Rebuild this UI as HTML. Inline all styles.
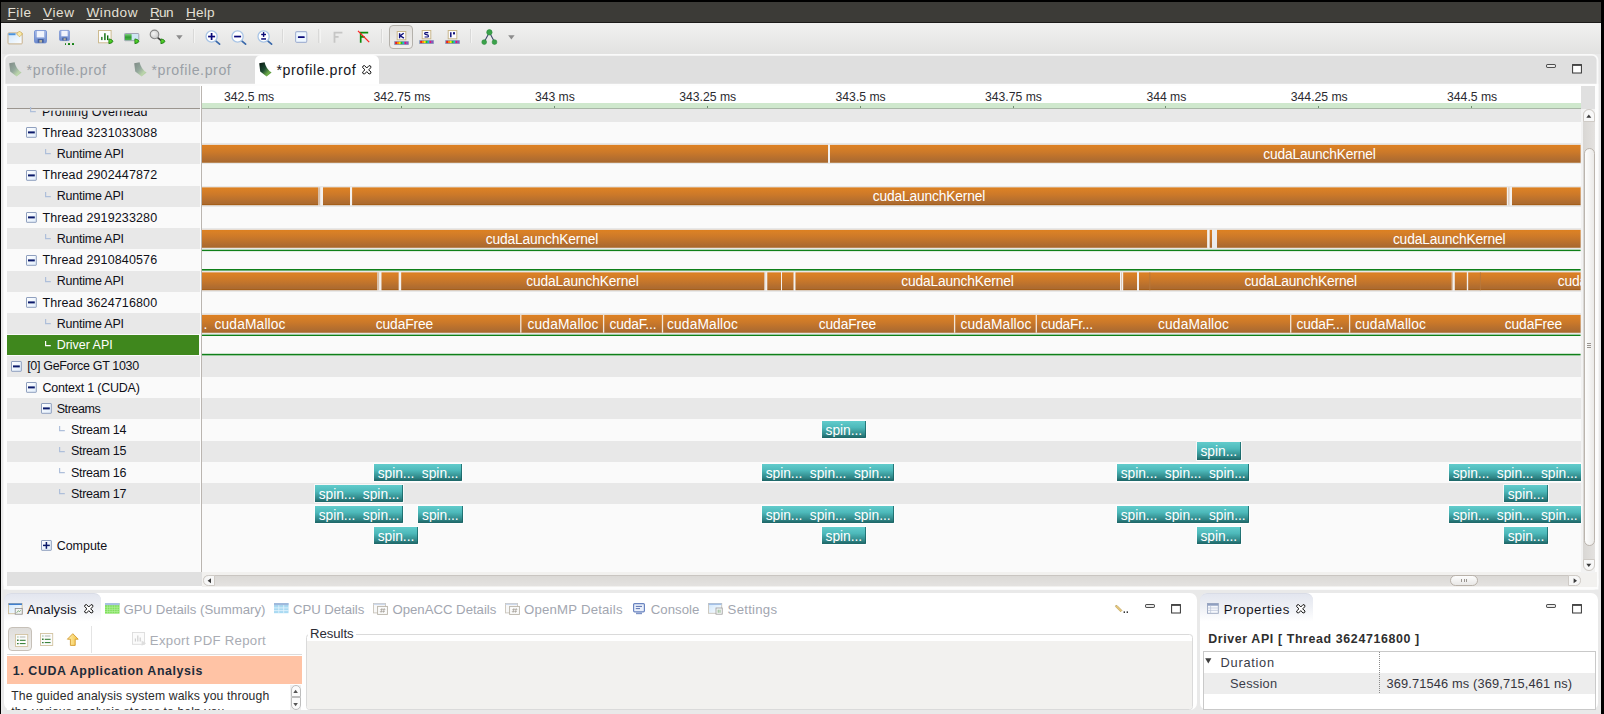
<!DOCTYPE html>
<html><head><meta charset="utf-8"><title>NVIDIA Visual Profiler</title>
<style>
html,body{margin:0;padding:0;}
body{width:1604px;height:714px;overflow:hidden;background:#000;position:relative;font-family:"Liberation Sans", sans-serif;}
#root{position:absolute;left:0;top:0;width:1604px;height:714px;overflow:hidden;}
#root div{position:absolute;box-sizing:border-box;}
#root svg{position:absolute;overflow:visible;}
.t{position:absolute;white-space:pre;}
u{text-decoration-thickness:1px;text-underline-offset:2px;}
</style></head><body><div id="root">
<div style="left:1px;top:2px;width:1600px;height:712px;background:#e9e9e9;"></div>
<div style="left:1px;top:2px;width:1600px;height:20.5px;background:#3c3b37;"></div>
<div style="left:1px;top:22px;width:1600px;height:1px;background:#1c1b19;"></div>
<span class="t" style="left:7.50px;top:5px;font-size:13.6px;line-height:15px;color:#e4e0d6;letter-spacing:0.531px;"><u>F</u>ile</span>
<span class="t" style="left:43.00px;top:5px;font-size:13.6px;line-height:15px;color:#e4e0d6;letter-spacing:0.594px;"><u>V</u>iew</span>
<span class="t" style="left:86.50px;top:5px;font-size:13.6px;line-height:15px;color:#e4e0d6;letter-spacing:0.528px;"><u>W</u>indow</span>
<span class="t" style="left:150.00px;top:5px;font-size:13.6px;line-height:15px;color:#e4e0d6;letter-spacing:-0.719px;"><u>R</u>un</span>
<span class="t" style="left:186.00px;top:5px;font-size:13.6px;line-height:15px;color:#e4e0d6;letter-spacing:0.177px;"><u>H</u>elp</span>
<div style="left:1px;top:23px;width:1600px;height:31px;background:linear-gradient(#f1f1f0,#e2e2e1);"></div>
<div style="left:1px;top:23px;width:1.2px;height:691px;background:#ececec;"></div>
<svg style="left:0;top:0" width="1604" height="714"><rect x="4.5" y="54.8" width="1593" height="533.8" rx="5.5" fill="#dfdfdf" stroke="#fafafa" stroke-width="1.8"/></svg>
<div style="left:254.8px;top:55px;width:124.4px;height:29px;background:#fff;border-radius:6px 6px 0 0;"></div>
<span class="t" style="left:26.60px;top:62px;font-size:14.2px;line-height:16px;color:#9a9fa6;letter-spacing:0.570px;">*profile.prof</span>
<span class="t" style="left:151.40px;top:62px;font-size:14.2px;line-height:16px;color:#9a9fa6;letter-spacing:0.570px;">*profile.prof</span>
<span class="t" style="left:276.50px;top:62px;font-size:14.2px;line-height:16px;color:#16161c;letter-spacing:0.553px;">*profile.prof</span>
<svg style="left:0;top:0" width="1604" height="714"><rect x="3.6" y="83.8" width="1594.8" height="505.7" rx="0" fill="#fdfdfd"/></svg>
<svg style="left:0;top:0" width="1604" height="714"><rect x="3.6" y="575" width="1594.8" height="14.5" rx="5" fill="#fdfdfd"/></svg>
<div style="left:7px;top:86px;width:193px;height:22.4px;background:#e1e1e1;"></div>
<div style="left:7px;top:108px;width:193px;height:1px;background:#9b958f;"></div>
<div style="left:202px;top:86px;width:1378.6px;height:17px;background:#fff;"></div>
<div style="left:202px;top:103px;width:1378.6px;height:5.4px;background:#cfe8cd;"></div>
<div style="left:202px;top:108px;width:1378.6px;height:1px;background:#a9b7a7;"></div>
<div style="left:248.1px;top:105.5px;width:1px;height:2.5px;background:#6f8f6f;"></div>
<span class="t" style="left:224.03px;top:90px;font-size:12.2px;line-height:14px;color:#2a2a30;">342.5 ms</span>
<div style="left:400.98px;top:105.5px;width:1px;height:2.5px;background:#6f8f6f;"></div>
<span class="t" style="left:373.52px;top:90px;font-size:12.2px;line-height:14px;color:#2a2a30;">342.75 ms</span>
<div style="left:553.86px;top:105.5px;width:1px;height:2.5px;background:#6f8f6f;"></div>
<span class="t" style="left:534.88px;top:90px;font-size:12.2px;line-height:14px;color:#2a2a30;">343 ms</span>
<div style="left:706.74px;top:105.5px;width:1px;height:2.5px;background:#6f8f6f;"></div>
<span class="t" style="left:679.28px;top:90px;font-size:12.2px;line-height:14px;color:#2a2a30;">343.25 ms</span>
<div style="left:859.62px;top:105.5px;width:1px;height:2.5px;background:#6f8f6f;"></div>
<span class="t" style="left:835.55px;top:90px;font-size:12.2px;line-height:14px;color:#2a2a30;">343.5 ms</span>
<div style="left:1012.5px;top:105.5px;width:1px;height:2.5px;background:#6f8f6f;"></div>
<span class="t" style="left:985.04px;top:90px;font-size:12.2px;line-height:14px;color:#2a2a30;">343.75 ms</span>
<div style="left:1165.38px;top:105.5px;width:1px;height:2.5px;background:#6f8f6f;"></div>
<span class="t" style="left:1146.40px;top:90px;font-size:12.2px;line-height:14px;color:#2a2a30;">344 ms</span>
<div style="left:1318.26px;top:105.5px;width:1px;height:2.5px;background:#6f8f6f;"></div>
<span class="t" style="left:1290.80px;top:90px;font-size:12.2px;line-height:14px;color:#2a2a30;">344.25 ms</span>
<div style="left:1471.14px;top:105.5px;width:1px;height:2.5px;background:#6f8f6f;"></div>
<span class="t" style="left:1447.07px;top:90px;font-size:12.2px;line-height:14px;color:#2a2a30;">344.5 ms</span>
<div style="left:7px;top:109px;width:193px;height:12.8px;background:#e8e8e8;"></div>
<div style="left:202px;top:109px;width:1378.6px;height:12.8px;background:#e8e8e8;"></div>
<svg style="left:30px;top:106.5px" width="7" height="6" viewBox="0 0 7 6"><path d="M0.6 0 V4.6 H5.8" fill="none" stroke="#aebfda" stroke-width="1.2"/></svg>
<span class="t" style="left:42.00px;top:105px;font-size:12.5px;line-height:14px;color:#101018;letter-spacing:0.116px;clip-path:inset(5.7px 0 0 0);">Profiling Overhead</span>
<div style="left:7px;top:121.8px;width:193px;height:21.35px;background:#fafafa;"></div>
<div style="left:202px;top:121.8px;width:1378.6px;height:21.35px;background:#fafafa;"></div>
<svg style="left:26.4px;top:127.1px" width="11" height="11" viewBox="0 0 11 11"><defs><linearGradient id="eg" x1="0" y1="0" x2="1" y2="1"><stop offset="0" stop-color="#fff"/><stop offset="1" stop-color="#e1eefc"/></linearGradient></defs><rect x="0.5" y="0.5" width="9.8" height="9.8" rx="0.4" fill="url(#eg)" stroke="#8f9fbe" stroke-width="1"/><rect x="2" y="4.4" width="6.8" height="2" fill="#0b1a6a"/></svg>
<span class="t" style="left:42.40px;top:126px;font-size:12.5px;line-height:14px;color:#101018;letter-spacing:0.131px;">Thread 3231033088</span>
<div style="left:7px;top:143.05px;width:193px;height:21.35px;background:#e8e8e8;"></div>
<div style="left:202px;top:143.05px;width:1378.6px;height:21.35px;background:#e8e8e8;"></div>
<svg style="left:45px;top:149.35px" width="7" height="6" viewBox="0 0 7 6"><path d="M0.6 0 V4.6 H5.8" fill="none" stroke="#aebfda" stroke-width="1.2"/></svg>
<span class="t" style="left:56.70px;top:147px;font-size:12.5px;line-height:14px;color:#101018;letter-spacing:-0.218px;">Runtime API</span>
<div style="left:7px;top:164.3px;width:193px;height:21.35px;background:#fafafa;"></div>
<div style="left:202px;top:164.3px;width:1378.6px;height:21.35px;background:#fafafa;"></div>
<svg style="left:26.4px;top:169.6px" width="11" height="11" viewBox="0 0 11 11"><defs><linearGradient id="eg" x1="0" y1="0" x2="1" y2="1"><stop offset="0" stop-color="#fff"/><stop offset="1" stop-color="#e1eefc"/></linearGradient></defs><rect x="0.5" y="0.5" width="9.8" height="9.8" rx="0.4" fill="url(#eg)" stroke="#8f9fbe" stroke-width="1"/><rect x="2" y="4.4" width="6.8" height="2" fill="#0b1a6a"/></svg>
<span class="t" style="left:42.40px;top:168px;font-size:12.5px;line-height:14px;color:#101018;letter-spacing:0.131px;">Thread 2902447872</span>
<div style="left:7px;top:185.55px;width:193px;height:21.35px;background:#e8e8e8;"></div>
<div style="left:202px;top:185.55px;width:1378.6px;height:21.35px;background:#e8e8e8;"></div>
<svg style="left:45px;top:191.85px" width="7" height="6" viewBox="0 0 7 6"><path d="M0.6 0 V4.6 H5.8" fill="none" stroke="#aebfda" stroke-width="1.2"/></svg>
<span class="t" style="left:56.70px;top:189px;font-size:12.5px;line-height:14px;color:#101018;letter-spacing:-0.218px;">Runtime API</span>
<div style="left:7px;top:206.8px;width:193px;height:21.35px;background:#fafafa;"></div>
<div style="left:202px;top:206.8px;width:1378.6px;height:21.35px;background:#fafafa;"></div>
<svg style="left:26.4px;top:212.1px" width="11" height="11" viewBox="0 0 11 11"><defs><linearGradient id="eg" x1="0" y1="0" x2="1" y2="1"><stop offset="0" stop-color="#fff"/><stop offset="1" stop-color="#e1eefc"/></linearGradient></defs><rect x="0.5" y="0.5" width="9.8" height="9.8" rx="0.4" fill="url(#eg)" stroke="#8f9fbe" stroke-width="1"/><rect x="2" y="4.4" width="6.8" height="2" fill="#0b1a6a"/></svg>
<span class="t" style="left:42.40px;top:211px;font-size:12.5px;line-height:14px;color:#101018;letter-spacing:0.131px;">Thread 2919233280</span>
<div style="left:7px;top:228.05px;width:193px;height:21.35px;background:#e8e8e8;"></div>
<div style="left:202px;top:228.05px;width:1378.6px;height:21.35px;background:#e8e8e8;"></div>
<svg style="left:45px;top:234.35px" width="7" height="6" viewBox="0 0 7 6"><path d="M0.6 0 V4.6 H5.8" fill="none" stroke="#aebfda" stroke-width="1.2"/></svg>
<span class="t" style="left:56.70px;top:232px;font-size:12.5px;line-height:14px;color:#101018;letter-spacing:-0.218px;">Runtime API</span>
<div style="left:7px;top:249.3px;width:193px;height:21.35px;background:#fafafa;"></div>
<div style="left:202px;top:249.3px;width:1378.6px;height:21.35px;background:#fafafa;"></div>
<svg style="left:26.4px;top:254.6px" width="11" height="11" viewBox="0 0 11 11"><defs><linearGradient id="eg" x1="0" y1="0" x2="1" y2="1"><stop offset="0" stop-color="#fff"/><stop offset="1" stop-color="#e1eefc"/></linearGradient></defs><rect x="0.5" y="0.5" width="9.8" height="9.8" rx="0.4" fill="url(#eg)" stroke="#8f9fbe" stroke-width="1"/><rect x="2" y="4.4" width="6.8" height="2" fill="#0b1a6a"/></svg>
<span class="t" style="left:42.40px;top:253px;font-size:12.5px;line-height:14px;color:#101018;letter-spacing:0.131px;">Thread 2910840576</span>
<div style="left:7px;top:270.55px;width:193px;height:21.35px;background:#e8e8e8;"></div>
<div style="left:202px;top:270.55px;width:1378.6px;height:21.35px;background:#e8e8e8;"></div>
<svg style="left:45px;top:276.85px" width="7" height="6" viewBox="0 0 7 6"><path d="M0.6 0 V4.6 H5.8" fill="none" stroke="#aebfda" stroke-width="1.2"/></svg>
<span class="t" style="left:56.70px;top:274px;font-size:12.5px;line-height:14px;color:#101018;letter-spacing:-0.218px;">Runtime API</span>
<div style="left:7px;top:291.8px;width:193px;height:21.35px;background:#fafafa;"></div>
<div style="left:202px;top:291.8px;width:1378.6px;height:21.35px;background:#fafafa;"></div>
<svg style="left:26.4px;top:297.1px" width="11" height="11" viewBox="0 0 11 11"><defs><linearGradient id="eg" x1="0" y1="0" x2="1" y2="1"><stop offset="0" stop-color="#fff"/><stop offset="1" stop-color="#e1eefc"/></linearGradient></defs><rect x="0.5" y="0.5" width="9.8" height="9.8" rx="0.4" fill="url(#eg)" stroke="#8f9fbe" stroke-width="1"/><rect x="2" y="4.4" width="6.8" height="2" fill="#0b1a6a"/></svg>
<span class="t" style="left:42.40px;top:296px;font-size:12.5px;line-height:14px;color:#101018;letter-spacing:0.131px;">Thread 3624716800</span>
<div style="left:7px;top:313.05px;width:193px;height:21.35px;background:#e8e8e8;"></div>
<div style="left:202px;top:313.05px;width:1378.6px;height:21.35px;background:#e8e8e8;"></div>
<svg style="left:45px;top:319.35px" width="7" height="6" viewBox="0 0 7 6"><path d="M0.6 0 V4.6 H5.8" fill="none" stroke="#aebfda" stroke-width="1.2"/></svg>
<span class="t" style="left:56.70px;top:317px;font-size:12.5px;line-height:14px;color:#101018;letter-spacing:-0.218px;">Runtime API</span>
<div style="left:7px;top:334.3px;width:193px;height:21.35px;background:#fafafa;"></div>
<div style="left:202px;top:334.3px;width:1378.6px;height:21.35px;background:#fafafa;"></div>
<div style="left:7px;top:335px;width:192.2px;height:19.9px;background:#3f871d;"></div>
<svg style="left:45px;top:340.6px" width="7" height="6" viewBox="0 0 7 6"><path d="M0.6 0 V4.6 H5.8" fill="none" stroke="#fff" stroke-width="1.2"/></svg>
<span class="t" style="left:56.70px;top:338px;font-size:12.5px;line-height:14px;color:#fff;letter-spacing:-0.030px;">Driver API</span>
<div style="left:7px;top:355.55px;width:193px;height:21.35px;background:#e8e8e8;"></div>
<div style="left:202px;top:355.55px;width:1378.6px;height:21.35px;background:#e8e8e8;"></div>
<svg style="left:11.2px;top:360.85px" width="11" height="11" viewBox="0 0 11 11"><defs><linearGradient id="eg" x1="0" y1="0" x2="1" y2="1"><stop offset="0" stop-color="#fff"/><stop offset="1" stop-color="#e1eefc"/></linearGradient></defs><rect x="0.5" y="0.5" width="9.8" height="9.8" rx="0.4" fill="url(#eg)" stroke="#8f9fbe" stroke-width="1"/><rect x="2" y="4.4" width="6.8" height="2" fill="#0b1a6a"/></svg>
<span class="t" style="left:27.20px;top:359px;font-size:12.5px;line-height:14px;color:#101018;letter-spacing:-0.327px;">[0] GeForce GT 1030</span>
<div style="left:7px;top:376.8px;width:193px;height:21.35px;background:#fafafa;"></div>
<div style="left:202px;top:376.8px;width:1378.6px;height:21.35px;background:#fafafa;"></div>
<svg style="left:26.4px;top:382.1px" width="11" height="11" viewBox="0 0 11 11"><defs><linearGradient id="eg" x1="0" y1="0" x2="1" y2="1"><stop offset="0" stop-color="#fff"/><stop offset="1" stop-color="#e1eefc"/></linearGradient></defs><rect x="0.5" y="0.5" width="9.8" height="9.8" rx="0.4" fill="url(#eg)" stroke="#8f9fbe" stroke-width="1"/><rect x="2" y="4.4" width="6.8" height="2" fill="#0b1a6a"/></svg>
<span class="t" style="left:42.40px;top:381px;font-size:12.5px;line-height:14px;color:#101018;letter-spacing:-0.216px;">Context 1 (CUDA)</span>
<div style="left:7px;top:398.05px;width:193px;height:21.35px;background:#e8e8e8;"></div>
<div style="left:202px;top:398.05px;width:1378.6px;height:21.35px;background:#e8e8e8;"></div>
<svg style="left:40.7px;top:403.35px" width="11" height="11" viewBox="0 0 11 11"><defs><linearGradient id="eg" x1="0" y1="0" x2="1" y2="1"><stop offset="0" stop-color="#fff"/><stop offset="1" stop-color="#e1eefc"/></linearGradient></defs><rect x="0.5" y="0.5" width="9.8" height="9.8" rx="0.4" fill="url(#eg)" stroke="#8f9fbe" stroke-width="1"/><rect x="2" y="4.4" width="6.8" height="2" fill="#0b1a6a"/></svg>
<span class="t" style="left:56.70px;top:402px;font-size:12.5px;line-height:14px;color:#101018;letter-spacing:-0.424px;">Streams</span>
<div style="left:7px;top:419.3px;width:193px;height:21.35px;background:#fafafa;"></div>
<div style="left:202px;top:419.3px;width:1378.6px;height:21.35px;background:#fafafa;"></div>
<svg style="left:59.2px;top:425.6px" width="7" height="6" viewBox="0 0 7 6"><path d="M0.6 0 V4.6 H5.8" fill="none" stroke="#aebfda" stroke-width="1.2"/></svg>
<span class="t" style="left:70.90px;top:423px;font-size:12.5px;line-height:14px;color:#101018;letter-spacing:-0.271px;">Stream 14</span>
<div style="left:7px;top:440.55px;width:193px;height:21.35px;background:#e8e8e8;"></div>
<div style="left:202px;top:440.55px;width:1378.6px;height:21.35px;background:#e8e8e8;"></div>
<svg style="left:59.2px;top:446.85px" width="7" height="6" viewBox="0 0 7 6"><path d="M0.6 0 V4.6 H5.8" fill="none" stroke="#aebfda" stroke-width="1.2"/></svg>
<span class="t" style="left:70.90px;top:444px;font-size:12.5px;line-height:14px;color:#101018;letter-spacing:-0.271px;">Stream 15</span>
<div style="left:7px;top:461.8px;width:193px;height:21.35px;background:#fafafa;"></div>
<div style="left:202px;top:461.8px;width:1378.6px;height:21.35px;background:#fafafa;"></div>
<svg style="left:59.2px;top:468.1px" width="7" height="6" viewBox="0 0 7 6"><path d="M0.6 0 V4.6 H5.8" fill="none" stroke="#aebfda" stroke-width="1.2"/></svg>
<span class="t" style="left:70.90px;top:466px;font-size:12.5px;line-height:14px;color:#101018;letter-spacing:-0.271px;">Stream 16</span>
<div style="left:7px;top:483.05px;width:193px;height:21.35px;background:#e8e8e8;"></div>
<div style="left:202px;top:483.05px;width:1378.6px;height:21.35px;background:#e8e8e8;"></div>
<svg style="left:59.2px;top:489.35px" width="7" height="6" viewBox="0 0 7 6"><path d="M0.6 0 V4.6 H5.8" fill="none" stroke="#aebfda" stroke-width="1.2"/></svg>
<span class="t" style="left:70.90px;top:487px;font-size:12.5px;line-height:14px;color:#101018;letter-spacing:-0.271px;">Stream 17</span>
<div style="left:7px;top:504.3px;width:193px;height:68.2px;background:#fafafa;"></div>
<div style="left:202px;top:504.3px;width:1378.6px;height:68.2px;background:#fafafa;"></div>
<svg style="left:40.7px;top:539.5px" width="11" height="11" viewBox="0 0 11 11"><defs><linearGradient id="eg" x1="0" y1="0" x2="1" y2="1"><stop offset="0" stop-color="#fff"/><stop offset="1" stop-color="#e1eefc"/></linearGradient></defs><rect x="0.5" y="0.5" width="9.8" height="9.8" rx="0.4" fill="url(#eg)" stroke="#8f9fbe" stroke-width="1"/><rect x="2" y="4.65" width="6.8" height="1.5" fill="#0b1a6a"/><rect x="4.65" y="2" width="1.5" height="6.8" fill="#0b1a6a"/></svg>
<span class="t" style="left:56.70px;top:539px;font-size:12.5px;line-height:14px;color:#101018;letter-spacing:-0.039px;">Compute</span>
<div style="left:6.6px;top:572.2px;width:195px;height:14.2px;background:#e0e0e0;"></div>
<div style="left:202px;top:572px;width:1394.6px;height:14.5px;background:#f2f1ef;"></div>
<div style="left:203px;top:574.7px;width:1377.6px;height:11.8px;background:linear-gradient(#dbd9d6,#e4e2e0);border-top:1px solid #c9c5c1;border-radius:6px;"></div>
<div style="left:203px;top:574.8px;width:12.3px;height:11.4px;background:#f7f7f7;border:1px solid #cfcbc6;border-radius:6px 0 0 6px;"></div>
<div style="left:1568.4px;top:574.8px;width:12.2px;height:11.4px;background:#f7f7f7;border:1px solid #cfcbc6;border-radius:0 6px 6px 0;"></div>
<svg style="left:207px;top:577.7px" width="5" height="6"><path d="M4 0.3 L0.6 2.8 L4 5.3Z" fill="#3a3a3a"/></svg>
<svg style="left:1572.6px;top:577.7px" width="5" height="6"><path d="M0.6 0.3 L4 2.8 L0.6 5.3Z" fill="#3a3a3a"/></svg>
<div style="left:1449.5px;top:574.6px;width:28.1px;height:11.7px;background:linear-gradient(#fdfdfd,#e9e8e6);border:1px solid #b9b2aa;border-radius:6px;"></div>
<div style="left:1461.3px;top:578.6px;width:1px;height:3.6px;background:#9a9590;"></div>
<div style="left:1463.5px;top:578.6px;width:1px;height:3.6px;background:#9a9590;"></div>
<div style="left:1465.7px;top:578.6px;width:1px;height:3.6px;background:#9a9590;"></div>
<div style="left:200.7px;top:86px;width:1.5px;height:486px;background:#bab5b0;"></div>
<div style="left:1580.6px;top:86px;width:14.7px;height:486.5px;background:#f2f2f2;"></div>
<div style="left:1581px;top:86.2px;width:14px;height:22.4px;background:#e0e0e0;"></div>
<div style="left:1583.3px;top:109.2px;width:11.5px;height:462px;background:linear-gradient(90deg,#d9d7d4,#e3e1df);border-radius:6px;"></div>
<div style="left:1583.3px;top:109.2px;width:11.5px;height:12.4px;background:#f8f8f8;border:1px solid #cfcbc6;border-radius:6px 6px 0 0;"></div>
<div style="left:1583.3px;top:558.7px;width:11.5px;height:12.5px;background:#f8f8f8;border:1px solid #cfcbc6;border-radius:0 0 6px 6px;"></div>
<svg style="left:1586.3px;top:113.8px" width="6" height="5"><path d="M0.3 3.8 L2.8 0.6 L5.3 3.8Z" fill="#3a3a3a"/></svg>
<svg style="left:1586.3px;top:563.2px" width="6" height="5"><path d="M0.3 0.8 L2.8 4 L5.3 0.8Z" fill="#3a3a3a"/></svg>
<div style="left:1583.6px;top:147.5px;width:11px;height:398.2px;background:linear-gradient(90deg,#fdfdfd,#ebeae8);border:1px solid #bbb5ae;border-radius:6px;"></div>
<div style="left:1587.3px;top:342.6px;width:3.6px;height:1px;background:#9a9590;"></div>
<div style="left:1587.3px;top:344.8px;width:3.6px;height:1px;background:#9a9590;"></div>
<div style="left:1587.3px;top:347px;width:3.6px;height:1px;background:#9a9590;"></div>
<svg style="left:0;top:0" width="1604" height="714"><defs><linearGradient id="gor" x1="0" y1="0" x2="0" y2="1"><stop offset="0" stop-color="#dd7f1f"/><stop offset="0.12" stop-color="#d98026"/><stop offset="0.4" stop-color="#cc7929"/><stop offset="0.85" stop-color="#af6c30"/><stop offset="0.93" stop-color="#ac6a2f"/><stop offset="0.96" stop-color="#a55f1a"/><stop offset="1" stop-color="#a55f1a"/></linearGradient></defs><rect x="202" y="144.9" width="626" height="17.8" fill="url(#gor)"/><rect x="828" y="144.9" width="2" height="17.8" fill="#f3f1ef"/><rect x="830" y="144.9" width="750.6" height="17.8" fill="url(#gor)"/><rect x="202" y="187.4" width="116" height="17.8" fill="url(#gor)"/><rect x="318" y="187.4" width="2.4" height="17.8" fill="#d9bfa8"/><rect x="320.4" y="187.4" width="2.6" height="17.8" fill="#f3f1ef"/><rect x="323" y="187.4" width="27" height="17.8" fill="url(#gor)"/><rect x="350" y="187.4" width="2.1" height="17.8" fill="#f3f1ef"/><rect x="352.1" y="187.4" width="1154.8" height="17.8" fill="url(#gor)"/><rect x="1506.9" y="187.4" width="1.5" height="17.8" fill="#f3f1ef"/><rect x="1508.4" y="187.4" width="1.2" height="17.8" fill="#d9bfa8"/><rect x="1509.6" y="187.4" width="2.4" height="17.8" fill="#f3f1ef"/><rect x="1512" y="187.4" width="68.6" height="17.8" fill="url(#gor)"/><rect x="202" y="229.9" width="1005.3" height="17.8" fill="url(#gor)"/><rect x="1207.3" y="229.9" width="2.4" height="17.8" fill="#f3f1ef"/><rect x="1209.7" y="229.9" width="2.3" height="17.8" fill="url(#gor)"/><rect x="1212" y="229.9" width="5" height="17.8" fill="#ececec"/><rect x="1217" y="229.9" width="363.6" height="17.8" fill="url(#gor)"/><rect x="202" y="272.4" width="175.3" height="17.8" fill="url(#gor)"/><rect x="377.3" y="272.4" width="2" height="17.8" fill="#d9bfa8"/><rect x="379.3" y="272.4" width="2.2" height="17.8" fill="#f3f1ef"/><rect x="381.5" y="272.4" width="17.3" height="17.8" fill="url(#gor)"/><rect x="398.8" y="272.4" width="2.4" height="17.8" fill="#f3f1ef"/><rect x="401.2" y="272.4" width="362.8" height="17.8" fill="url(#gor)"/><rect x="764" y="272.4" width="1.4" height="17.8" fill="#d9bfa8"/><rect x="765.4" y="272.4" width="1.9" height="17.8" fill="#f3f1ef"/><rect x="767.3" y="272.4" width="13.7" height="17.8" fill="url(#gor)"/><rect x="781" y="272.4" width="1" height="17.8" fill="#f3f1ef"/><rect x="782" y="272.4" width="11.7" height="17.8" fill="url(#gor)"/><rect x="793.7" y="272.4" width="1.8" height="17.8" fill="#f3f1ef"/><rect x="795.5" y="272.4" width="324.5" height="17.8" fill="url(#gor)"/><rect x="1120" y="272.4" width="1.2" height="17.8" fill="#f3f1ef"/><rect x="1121.2" y="272.4" width="0.8" height="17.8" fill="#d9bfa8"/><rect x="1122" y="272.4" width="1.2" height="17.8" fill="#f3f1ef"/><rect x="1123.2" y="272.4" width="13.8" height="17.8" fill="url(#gor)"/><rect x="1137" y="272.4" width="2" height="17.8" fill="#f3f1ef"/><rect x="1139" y="272.4" width="312.8" height="17.8" fill="url(#gor)"/><rect x="1451.8" y="272.4" width="1.2" height="17.8" fill="#d9bfa8"/><rect x="1453" y="272.4" width="1.8" height="17.8" fill="#f3f1ef"/><rect x="1454.8" y="272.4" width="12.1" height="17.8" fill="url(#gor)"/><rect x="1466.9" y="272.4" width="1.3" height="17.8" fill="#f3f1ef"/><rect x="1468.2" y="272.4" width="112.4" height="17.8" fill="url(#gor)"/><rect x="1149.4" y="272.4" width="0.9" height="17.8" fill="#b7783c"/><rect x="1479.9" y="272.4" width="0.9" height="17.8" fill="#b7783c"/><rect x="202" y="314.9" width="1378.6" height="17.8" fill="url(#gor)"/><rect x="520.15" y="314.9" width="1.3" height="17.8" fill="#f3e6d9"/><rect x="602.95" y="314.9" width="1.3" height="17.8" fill="#f3e6d9"/><rect x="661.85" y="314.9" width="1.3" height="17.8" fill="#f3e6d9"/><rect x="953.95" y="314.9" width="1.3" height="17.8" fill="#f3e6d9"/><rect x="1035.65" y="314.9" width="1.3" height="17.8" fill="#f3e6d9"/><rect x="1290.05" y="314.9" width="1.3" height="17.8" fill="#f3e6d9"/><rect x="1348.95" y="314.9" width="1.3" height="17.8" fill="#f3e6d9"/></svg>
<span class="t" style="left:1263.20px;top:147px;font-size:13.8px;line-height:15px;color:#fff;letter-spacing:-0.165px;">cudaLaunchKernel</span>
<span class="t" style="left:872.70px;top:189px;font-size:13.8px;line-height:15px;color:#fff;letter-spacing:-0.165px;">cudaLaunchKernel</span>
<span class="t" style="left:485.70px;top:232px;font-size:13.8px;line-height:15px;color:#fff;letter-spacing:-0.165px;">cudaLaunchKernel</span>
<span class="t" style="left:1392.90px;top:232px;font-size:13.8px;line-height:15px;color:#fff;letter-spacing:-0.165px;">cudaLaunchKernel</span>
<span class="t" style="left:526.20px;top:274px;font-size:13.8px;line-height:15px;color:#fff;letter-spacing:-0.165px;">cudaLaunchKernel</span>
<span class="t" style="left:901.20px;top:274px;font-size:13.8px;line-height:15px;color:#fff;letter-spacing:-0.165px;">cudaLaunchKernel</span>
<span class="t" style="left:1244.40px;top:274px;font-size:13.8px;line-height:15px;color:#fff;letter-spacing:-0.165px;">cudaLaunchKernel</span>
<div style="left:1540px;top:272.35px;width:40.6px;height:17.8px;overflow:hidden;">
<span class="t" style="left:17.80px;top:2px;font-size:13.8px;line-height:15px;color:#fff;letter-spacing:-0.165px;">cudaLaunchKernel</span>
</div>
<span class="t" style="left:203.50px;top:317px;font-size:13.8px;line-height:15px;color:#fff;">.</span>
<span class="t" style="left:214.50px;top:317px;font-size:13.8px;line-height:15px;color:#fff;letter-spacing:0.134px;">cudaMalloc</span>
<span class="t" style="left:375.75px;top:317px;font-size:13.8px;line-height:15px;color:#fff;letter-spacing:-0.114px;">cudaFree</span>
<span class="t" style="left:527.50px;top:317px;font-size:13.8px;line-height:15px;color:#fff;letter-spacing:0.134px;">cudaMalloc</span>
<span class="t" style="left:609.50px;top:317px;font-size:13.8px;line-height:15px;color:#fff;letter-spacing:-0.190px;">cudaF...</span>
<span class="t" style="left:667.00px;top:317px;font-size:13.8px;line-height:15px;color:#fff;letter-spacing:0.134px;">cudaMalloc</span>
<span class="t" style="left:818.75px;top:317px;font-size:13.8px;line-height:15px;color:#fff;letter-spacing:-0.114px;">cudaFree</span>
<span class="t" style="left:960.50px;top:317px;font-size:13.8px;line-height:15px;color:#fff;letter-spacing:0.134px;">cudaMalloc</span>
<span class="t" style="left:1041.00px;top:317px;font-size:13.8px;line-height:15px;color:#fff;letter-spacing:-0.211px;">cudaFr...</span>
<span class="t" style="left:1158.00px;top:317px;font-size:13.8px;line-height:15px;color:#fff;letter-spacing:0.134px;">cudaMalloc</span>
<span class="t" style="left:1296.50px;top:317px;font-size:13.8px;line-height:15px;color:#fff;letter-spacing:-0.190px;">cudaF...</span>
<span class="t" style="left:1355.00px;top:317px;font-size:13.8px;line-height:15px;color:#fff;letter-spacing:0.134px;">cudaMalloc</span>
<span class="t" style="left:1504.75px;top:317px;font-size:13.8px;line-height:15px;color:#fff;letter-spacing:-0.114px;">cudaFree</span>
<svg style="left:0;top:0" width="1604" height="714"><rect x="202" y="249.7" width="1378.6" height="1.4" rx="0" fill="#0f7f19"/></svg>
<svg style="left:0;top:0" width="1604" height="714"><rect x="202" y="269" width="1378.6" height="1.6" rx="0" fill="#0f7f19"/></svg>
<svg style="left:0;top:0" width="1604" height="714"><rect x="202" y="334.6" width="1378.6" height="1.4" rx="0" fill="#0f7f19"/></svg>
<svg style="left:0;top:0" width="1604" height="714"><rect x="202" y="353.8" width="1378.6" height="1.6" rx="0" fill="#0f7f19"/></svg>
<div style="left:821.9px;top:421.2px;width:44.15px;height:17.3px;background:linear-gradient(#62cccc 0%,#4db9ba 40%,#2f8687 85%,#226c6d 100%);overflow:hidden;box-shadow:0 0 0 0.8px rgba(255,255,255,0.85);border-right:1px solid rgba(20,95,96,0.75);border-bottom:1px solid #1f6a6b;">
<span class="t" style="left:3.70px;top:2px;font-size:13.8px;line-height:15px;color:#fff;letter-spacing:-0.035px;">spin...</span>
</div>
<div style="left:1196.8px;top:442.45px;width:44.15px;height:17.3px;background:linear-gradient(#62cccc 0%,#4db9ba 40%,#2f8687 85%,#226c6d 100%);overflow:hidden;box-shadow:0 0 0 0.8px rgba(255,255,255,0.85);border-right:1px solid rgba(20,95,96,0.75);border-bottom:1px solid #1f6a6b;">
<span class="t" style="left:3.70px;top:2px;font-size:13.8px;line-height:15px;color:#fff;letter-spacing:-0.035px;">spin...</span>
</div>
<div style="left:374px;top:463.7px;width:88.3px;height:17.3px;background:linear-gradient(#62cccc 0%,#4db9ba 40%,#2f8687 85%,#226c6d 100%);overflow:hidden;box-shadow:0 0 0 0.8px rgba(255,255,255,0.85);border-right:1px solid rgba(20,95,96,0.75);border-bottom:1px solid #1f6a6b;">
<span class="t" style="left:3.70px;top:2px;font-size:13.8px;line-height:15px;color:#fff;letter-spacing:-0.035px;">spin...</span>
<span class="t" style="left:47.85px;top:2px;font-size:13.8px;line-height:15px;color:#fff;letter-spacing:-0.035px;">spin...</span>
</div>
<div style="left:762px;top:463.7px;width:132.45px;height:17.3px;background:linear-gradient(#62cccc 0%,#4db9ba 40%,#2f8687 85%,#226c6d 100%);overflow:hidden;box-shadow:0 0 0 0.8px rgba(255,255,255,0.85);border-right:1px solid rgba(20,95,96,0.75);border-bottom:1px solid #1f6a6b;">
<span class="t" style="left:3.70px;top:2px;font-size:13.8px;line-height:15px;color:#fff;letter-spacing:-0.035px;">spin...</span>
<span class="t" style="left:47.85px;top:2px;font-size:13.8px;line-height:15px;color:#fff;letter-spacing:-0.035px;">spin...</span>
<span class="t" style="left:92.00px;top:2px;font-size:13.8px;line-height:15px;color:#fff;letter-spacing:-0.035px;">spin...</span>
</div>
<div style="left:1117px;top:463.7px;width:132.45px;height:17.3px;background:linear-gradient(#62cccc 0%,#4db9ba 40%,#2f8687 85%,#226c6d 100%);overflow:hidden;box-shadow:0 0 0 0.8px rgba(255,255,255,0.85);border-right:1px solid rgba(20,95,96,0.75);border-bottom:1px solid #1f6a6b;">
<span class="t" style="left:3.70px;top:2px;font-size:13.8px;line-height:15px;color:#fff;letter-spacing:-0.035px;">spin...</span>
<span class="t" style="left:47.85px;top:2px;font-size:13.8px;line-height:15px;color:#fff;letter-spacing:-0.035px;">spin...</span>
<span class="t" style="left:92.00px;top:2px;font-size:13.8px;line-height:15px;color:#fff;letter-spacing:-0.035px;">spin...</span>
</div>
<div style="left:1449px;top:463.7px;width:131.6px;height:17.3px;background:linear-gradient(#62cccc 0%,#4db9ba 40%,#2f8687 85%,#226c6d 100%);overflow:hidden;box-shadow:0 0 0 0.8px rgba(255,255,255,0.85);border-bottom:1px solid #1f6a6b;">
<span class="t" style="left:3.70px;top:2px;font-size:13.8px;line-height:15px;color:#fff;letter-spacing:-0.035px;">spin...</span>
<span class="t" style="left:47.85px;top:2px;font-size:13.8px;line-height:15px;color:#fff;letter-spacing:-0.035px;">spin...</span>
<span class="t" style="left:92.00px;top:2px;font-size:13.8px;line-height:15px;color:#fff;letter-spacing:-0.035px;">spin...</span>
</div>
<div style="left:315px;top:484.95px;width:88.3px;height:17.3px;background:linear-gradient(#62cccc 0%,#4db9ba 40%,#2f8687 85%,#226c6d 100%);overflow:hidden;box-shadow:0 0 0 0.8px rgba(255,255,255,0.85);border-right:1px solid rgba(20,95,96,0.75);border-bottom:1px solid #1f6a6b;">
<span class="t" style="left:3.70px;top:2px;font-size:13.8px;line-height:15px;color:#fff;letter-spacing:-0.035px;">spin...</span>
<span class="t" style="left:47.85px;top:2px;font-size:13.8px;line-height:15px;color:#fff;letter-spacing:-0.035px;">spin...</span>
</div>
<div style="left:1504px;top:484.95px;width:44.15px;height:17.3px;background:linear-gradient(#62cccc 0%,#4db9ba 40%,#2f8687 85%,#226c6d 100%);overflow:hidden;box-shadow:0 0 0 0.8px rgba(255,255,255,0.85);border-right:1px solid rgba(20,95,96,0.75);border-bottom:1px solid #1f6a6b;">
<span class="t" style="left:3.70px;top:2px;font-size:13.8px;line-height:15px;color:#fff;letter-spacing:-0.035px;">spin...</span>
</div>
<div style="left:315px;top:506.2px;width:88.3px;height:17.3px;background:linear-gradient(#62cccc 0%,#4db9ba 40%,#2f8687 85%,#226c6d 100%);overflow:hidden;box-shadow:0 0 0 0.8px rgba(255,255,255,0.85);border-right:1px solid rgba(20,95,96,0.75);border-bottom:1px solid #1f6a6b;">
<span class="t" style="left:3.70px;top:2px;font-size:13.8px;line-height:15px;color:#fff;letter-spacing:-0.035px;">spin...</span>
<span class="t" style="left:47.85px;top:2px;font-size:13.8px;line-height:15px;color:#fff;letter-spacing:-0.035px;">spin...</span>
</div>
<div style="left:418.4px;top:506.2px;width:44.15px;height:17.3px;background:linear-gradient(#62cccc 0%,#4db9ba 40%,#2f8687 85%,#226c6d 100%);overflow:hidden;box-shadow:0 0 0 0.8px rgba(255,255,255,0.85);border-right:1px solid rgba(20,95,96,0.75);border-bottom:1px solid #1f6a6b;">
<span class="t" style="left:3.70px;top:2px;font-size:13.8px;line-height:15px;color:#fff;letter-spacing:-0.035px;">spin...</span>
</div>
<div style="left:762px;top:506.2px;width:132.45px;height:17.3px;background:linear-gradient(#62cccc 0%,#4db9ba 40%,#2f8687 85%,#226c6d 100%);overflow:hidden;box-shadow:0 0 0 0.8px rgba(255,255,255,0.85);border-right:1px solid rgba(20,95,96,0.75);border-bottom:1px solid #1f6a6b;">
<span class="t" style="left:3.70px;top:2px;font-size:13.8px;line-height:15px;color:#fff;letter-spacing:-0.035px;">spin...</span>
<span class="t" style="left:47.85px;top:2px;font-size:13.8px;line-height:15px;color:#fff;letter-spacing:-0.035px;">spin...</span>
<span class="t" style="left:92.00px;top:2px;font-size:13.8px;line-height:15px;color:#fff;letter-spacing:-0.035px;">spin...</span>
</div>
<div style="left:1117px;top:506.2px;width:132.45px;height:17.3px;background:linear-gradient(#62cccc 0%,#4db9ba 40%,#2f8687 85%,#226c6d 100%);overflow:hidden;box-shadow:0 0 0 0.8px rgba(255,255,255,0.85);border-right:1px solid rgba(20,95,96,0.75);border-bottom:1px solid #1f6a6b;">
<span class="t" style="left:3.70px;top:2px;font-size:13.8px;line-height:15px;color:#fff;letter-spacing:-0.035px;">spin...</span>
<span class="t" style="left:47.85px;top:2px;font-size:13.8px;line-height:15px;color:#fff;letter-spacing:-0.035px;">spin...</span>
<span class="t" style="left:92.00px;top:2px;font-size:13.8px;line-height:15px;color:#fff;letter-spacing:-0.035px;">spin...</span>
</div>
<div style="left:1449px;top:506.2px;width:131.6px;height:17.3px;background:linear-gradient(#62cccc 0%,#4db9ba 40%,#2f8687 85%,#226c6d 100%);overflow:hidden;box-shadow:0 0 0 0.8px rgba(255,255,255,0.85);border-bottom:1px solid #1f6a6b;">
<span class="t" style="left:3.70px;top:2px;font-size:13.8px;line-height:15px;color:#fff;letter-spacing:-0.035px;">spin...</span>
<span class="t" style="left:47.85px;top:2px;font-size:13.8px;line-height:15px;color:#fff;letter-spacing:-0.035px;">spin...</span>
<span class="t" style="left:92.00px;top:2px;font-size:13.8px;line-height:15px;color:#fff;letter-spacing:-0.035px;">spin...</span>
</div>
<div style="left:374px;top:527px;width:44.15px;height:16.8px;background:linear-gradient(#62cccc 0%,#4db9ba 40%,#2f8687 85%,#226c6d 100%);overflow:hidden;box-shadow:0 0 0 0.8px rgba(255,255,255,0.85);border-right:1px solid rgba(20,95,96,0.75);border-bottom:1px solid #1f6a6b;">
<span class="t" style="left:3.70px;top:2px;font-size:13.8px;line-height:15px;color:#fff;letter-spacing:-0.035px;">spin...</span>
</div>
<div style="left:821.9px;top:527px;width:44.15px;height:16.8px;background:linear-gradient(#62cccc 0%,#4db9ba 40%,#2f8687 85%,#226c6d 100%);overflow:hidden;box-shadow:0 0 0 0.8px rgba(255,255,255,0.85);border-right:1px solid rgba(20,95,96,0.75);border-bottom:1px solid #1f6a6b;">
<span class="t" style="left:3.70px;top:2px;font-size:13.8px;line-height:15px;color:#fff;letter-spacing:-0.035px;">spin...</span>
</div>
<div style="left:1196.8px;top:527px;width:44.15px;height:16.8px;background:linear-gradient(#62cccc 0%,#4db9ba 40%,#2f8687 85%,#226c6d 100%);overflow:hidden;box-shadow:0 0 0 0.8px rgba(255,255,255,0.85);border-right:1px solid rgba(20,95,96,0.75);border-bottom:1px solid #1f6a6b;">
<span class="t" style="left:3.70px;top:2px;font-size:13.8px;line-height:15px;color:#fff;letter-spacing:-0.035px;">spin...</span>
</div>
<div style="left:1504px;top:527px;width:44.15px;height:16.8px;background:linear-gradient(#62cccc 0%,#4db9ba 40%,#2f8687 85%,#226c6d 100%);overflow:hidden;box-shadow:0 0 0 0.8px rgba(255,255,255,0.85);border-right:1px solid rgba(20,95,96,0.75);border-bottom:1px solid #1f6a6b;">
<span class="t" style="left:3.70px;top:2px;font-size:13.8px;line-height:15px;color:#fff;letter-spacing:-0.035px;">spin...</span>
</div>
<div style="left:3.6px;top:593px;width:1193px;height:117.4px;background:#fff;border-radius:7px;"></div>
<div style="left:3.6px;top:593px;width:97px;height:30px;background:linear-gradient(#e3e6ef 0%,#eef0f5 45%,#fff 95%);border-radius:7px 7px 0 0;border-top:1px solid #d9dce6;"></div>
<span class="t" style="left:27.00px;top:602px;font-size:13.2px;line-height:15px;color:#14141c;letter-spacing:0.056px;">Analysis</span>
<span class="t" style="left:123.50px;top:602px;font-size:13.2px;line-height:15px;color:#a2a6b0;letter-spacing:0.029px;">GPU Details (Summary)</span>
<span class="t" style="left:293.10px;top:602px;font-size:13.2px;line-height:15px;color:#a2a6b0;letter-spacing:-0.063px;">CPU Details</span>
<span class="t" style="left:392.40px;top:602px;font-size:13.2px;line-height:15px;color:#a2a6b0;letter-spacing:-0.006px;">OpenACC Details</span>
<span class="t" style="left:524.00px;top:602px;font-size:13.2px;line-height:15px;color:#a2a6b0;letter-spacing:0.209px;">OpenMP Details</span>
<span class="t" style="left:650.80px;top:602px;font-size:13.2px;line-height:15px;color:#a2a6b0;letter-spacing:0.035px;">Console</span>
<span class="t" style="left:727.60px;top:602px;font-size:13.2px;line-height:15px;color:#a2a6b0;letter-spacing:0.249px;">Settings</span>
<div style="left:8.1px;top:627.2px;width:23.7px;height:23.4px;background:linear-gradient(#dfddda,#efeeec);border:1px solid #c6c0b8;border-radius:4px;"></div>
<div style="left:90.7px;top:626px;width:1px;height:26.5px;background:#e4e4e4;"></div>
<span class="t" style="left:149.80px;top:633px;font-size:13.2px;line-height:15px;color:#a9acb4;letter-spacing:0.287px;">Export PDF Report</span>
<div style="left:6.7px;top:654.3px;width:295.3px;height:1px;background:#dcdcdc;"></div>
<div style="left:6.7px;top:656.2px;width:295.3px;height:27.4px;background:#ffc3a5;"></div>
<span class="t" style="left:12.80px;top:664px;font-size:12.4px;line-height:14px;color:#1d2b3a;font-weight:700;letter-spacing:0.600px;">1. CUDA Application Analysis</span>
<div style="left:6.7px;top:684px;width:283.5px;height:26.4px;background:#fff;overflow:hidden;"></div>
<span class="t" style="left:11.20px;top:689px;font-size:12.2px;line-height:14px;color:#2b2b2b;letter-spacing:0.139px;">The guided analysis system walks you through</span>
<div style="left:6.7px;top:700px;width:284px;height:9.9px;overflow:hidden;">
<span class="t" style="left:4.50px;top:5px;font-size:12.2px;line-height:14px;color:#2b2b2b;letter-spacing:0.096px;">the various analysis stages to help you</span>
</div>
<div style="left:290.3px;top:684.6px;width:11px;height:25.6px;background:#efefef;"></div>
<div style="left:290.6px;top:685px;width:10.4px;height:12.4px;background:#fbfbfb;border:1px solid #bdbdbd;border-radius:5px 5px 0 0;"></div>
<div style="left:290.6px;top:697.4px;width:10.4px;height:12.4px;background:#fbfbfb;border:1px solid #bdbdbd;border-radius:0 0 5px 5px;"></div>
<svg style="left:293.3px;top:688.5px" width="6" height="5"><path d="M0.3 4 L2.6 0.8 L4.9 4Z" fill="#555"/></svg>
<svg style="left:293.3px;top:701.5px" width="6" height="5"><path d="M0.3 1 L2.6 4.2 L4.9 1Z" fill="#555"/></svg>
<div style="left:305.5px;top:634.4px;width:887.2px;height:75.4px;background:#fff;border:1px solid #dadada;border-radius:3.5px;"></div>
<div style="left:306.5px;top:641px;width:885.2px;height:67.6px;background:#f2f1ef;border-radius:0 0 3px 3px;"></div>
<div style="left:308px;top:630px;width:48px;height:10px;background:#fff;"></div>
<span class="t" style="left:310.00px;top:626px;font-size:13.2px;line-height:15px;color:#2c2c34;letter-spacing:-0.064px;">Results</span>
<div style="left:1200.4px;top:593px;width:397.8px;height:117.4px;background:#fff;border-radius:7px;"></div>
<div style="left:1200.4px;top:593px;width:112.5px;height:30px;background:linear-gradient(#e3e6ef 0%,#eef0f5 45%,#fff 95%);border-radius:7px 7px 0 0;border-top:1px solid #d9dce6;"></div>
<span class="t" style="left:1223.80px;top:602px;font-size:13.2px;line-height:15px;color:#14141c;letter-spacing:0.610px;">Properties</span>
<span class="t" style="left:1208.20px;top:632px;font-size:12.4px;line-height:14px;color:#2e2e2e;font-weight:700;letter-spacing:0.622px;">Driver API [ Thread 3624716800 ]</span>
<div style="left:1203.2px;top:650.6px;width:392.6px;height:59.4px;background:#fff;border:1px solid #c9c9c9;"></div>
<div style="left:1204.2px;top:672.5px;width:390.6px;height:21.1px;background:#ededed;"></div>
<div style="left:1379.4px;top:651.6px;width:1px;height:42px;background:repeating-linear-gradient(#8a8a8a 0,#8a8a8a 1px,transparent 1px,transparent 2px);"></div>
<svg style="left:1205.2px;top:658.2px" width="7" height="6"><path d="M0.2 0.2 H6.4 L3.3 5.4Z" fill="#3c3c3c"/></svg>
<span class="t" style="left:1220.60px;top:655px;font-size:12.8px;line-height:15px;color:#3a3c48;letter-spacing:0.732px;">Duration</span>
<span class="t" style="left:1230.00px;top:676px;font-size:12.8px;line-height:15px;color:#3a3c48;letter-spacing:0.245px;">Session</span>
<span class="t" style="left:1386.60px;top:676px;font-size:12.8px;line-height:15px;color:#34343c;letter-spacing:0.142px;">369.71546 ms (369,715,461 ns)</span>
<svg width="0" height="0" style="left:0;top:0"><defs><linearGradient id="gwin" x1="0" y1="0" x2="1" y2="1"><stop offset="0" stop-color="#cfe6fb"/><stop offset="1" stop-color="#ffffff"/></linearGradient><linearGradient id="gflop" x1="0" y1="0" x2="0" y2="1"><stop offset="0" stop-color="#a9bde8"/><stop offset="1" stop-color="#6a88cc"/></linearGradient><linearGradient id="gplay" x1="0" y1="0" x2="1" y2="1"><stop offset="0" stop-color="#7bea3a"/><stop offset="1" stop-color="#1fae12"/></linearGradient><linearGradient id="ggreen" x1="0" y1="0" x2="0" y2="1"><stop offset="0" stop-color="#7fcf7f"/><stop offset="0.5" stop-color="#2f9a2f"/><stop offset="1" stop-color="#4fb54f"/></linearGradient><radialGradient id="glens" cx="0.4" cy="0.4" r="0.7"><stop offset="0" stop-color="#f4f4f4"/><stop offset="1" stop-color="#c4c4c4"/></radialGradient><linearGradient id="gnv" x1="0" y1="0" x2="1" y2="1"><stop offset="0" stop-color="#07150f"/><stop offset="0.45" stop-color="#1d4a33"/><stop offset="0.75" stop-color="#6fae4a"/><stop offset="1" stop-color="#3d7a2a"/></linearGradient><linearGradient id="gnvf" x1="0" y1="0" x2="1" y2="1"><stop offset="0" stop-color="#7f8a86"/><stop offset="0.45" stop-color="#93a79c"/><stop offset="0.75" stop-color="#bcd6ab"/><stop offset="1" stop-color="#a3bd9a"/></linearGradient><linearGradient id="garrow" x1="0" y1="0" x2="1" y2="0"><stop offset="0" stop-color="#fff0b4"/><stop offset="1" stop-color="#f5c444"/></linearGradient></defs></svg>
<svg style="left:6.5px;top:29.5px" width="17" height="15" viewBox="0 0 17 15"><rect x="1" y="2.9" width="14.2" height="11" rx="0.8" fill="url(#gwin)" stroke="#c7b08a" stroke-width="1"/><rect x="1.5" y="3.3" width="7" height="1.9" fill="#4b93dc"/><path d="M12.5 1 L13.9 2.5 L15.6 3.9 L13.9 5.3 L12.5 6.8 L11.1 5.3 L9.5 3.9 L11.1 2.5Z" fill="#f9e9a6" stroke="#d0a94a" stroke-width="0.7"/></svg>
<svg style="left:34px;top:30.1px" width="13" height="13.4" viewBox="0 0 13 13.4"><rect x="0.5" y="0.5" width="12" height="12.4" rx="1.3" fill="url(#gflop)" stroke="#6d8bd0" stroke-width="0.9"/><rect x="2.3" y="0.8" width="8.4" height="7" fill="#f1f4fc" stroke="#7d97d6" stroke-width="0.5"/><rect x="3.7" y="9" width="6" height="3.8" rx="0.5" fill="#45609f"/><rect x="5.4" y="10" width="2.6" height="2.6" fill="#b5b09a"/></svg>
<svg style="left:59px;top:29.9px" width="11" height="11" viewBox="0 0 13 13.4"><rect x="0.5" y="0.5" width="12" height="12.4" rx="1.3" fill="url(#gflop)" stroke="#6d8bd0" stroke-width="0.9"/><rect x="2.3" y="0.8" width="8.4" height="7" fill="#f1f4fc" stroke="#7d97d6" stroke-width="0.5"/><rect x="3.7" y="9" width="6" height="3.8" rx="0.5" fill="#45609f"/><rect x="5.4" y="10" width="2.6" height="2.6" fill="#b5b09a"/></svg>
<div style="left:64.6px;top:43px;width:1.9px;height:1.5px;background:#0c7d0c;border-radius:0.5px;"></div>
<div style="left:68.3px;top:43px;width:1.9px;height:1.5px;background:#0c7d0c;border-radius:0.5px;"></div>
<div style="left:72px;top:43px;width:1.9px;height:1.5px;background:#0c7d0c;border-radius:0.5px;"></div>
<svg style="left:97.6px;top:29.5px" width="14" height="14" viewBox="0 0 14 14"><rect x="0.5" y="0.5" width="12.6" height="12.3" fill="#fdfdfd" stroke="#cdbb90" stroke-width="1"/><rect x="3.2" y="6.9" width="1.3" height="3.2" fill="#0c6c0c"/><rect x="6.2" y="3.2" width="1.4" height="6.9" fill="#0c6c0c"/><rect x="9" y="5.4" width="1.4" height="4.7" fill="#0c6c0c"/></svg>
<svg style="left:107.9px;top:38.2px" width="6" height="6.4" viewBox="0 0 6 6.4"><path d="M0.9 0.9 Q4.6 1.4 4.9 3.3 Q4.6 5.2 0.9 5.7Z" fill="url(#gplay)" stroke="#14730c" stroke-width="0.8" stroke-linejoin="round"/></svg>
<svg style="left:123.7px;top:33px" width="16" height="9" viewBox="0 0 16 9"><rect x="0.5" y="0.5" width="14.3" height="7.2" rx="0.8" fill="#cfe6f4" stroke="#9a9cae" stroke-width="0.9"/><rect x="1" y="1" width="6.6" height="6.2" fill="url(#ggreen)"/></svg>
<svg style="left:133.9px;top:38.2px" width="6" height="6.4" viewBox="0 0 6 6.4"><path d="M0.9 0.9 Q4.6 1.4 4.9 3.3 Q4.6 5.2 0.9 5.7Z" fill="url(#gplay)" stroke="#14730c" stroke-width="0.8" stroke-linejoin="round"/></svg>
<svg style="left:149px;top:29px" width="14" height="14" viewBox="0 0 14 14"><path d="M8.6 8.6 L12.3 11.6" stroke="#3b3b3b" stroke-width="1.7"/><circle cx="5.5" cy="5.4" r="4.3" fill="url(#glens)" stroke="#858585" stroke-width="1.1"/></svg>
<svg style="left:159.7px;top:38.2px" width="6" height="6.4" viewBox="0 0 6 6.4"><path d="M0.9 0.9 Q4.6 1.4 4.9 3.3 Q4.6 5.2 0.9 5.7Z" fill="url(#gplay)" stroke="#14730c" stroke-width="0.8" stroke-linejoin="round"/></svg>
<svg style="left:175.6px;top:35.1px" width="7" height="5" viewBox="0 0 7 5"><path d="M0.2 0.3 H6.6 L3.4 4.5Z" fill="#8c8c8c"/></svg>
<div style="left:192.9px;top:28.7px;width:1.1px;height:14px;background:#d9d9d8;"></div>
<div style="left:194px;top:28.7px;width:1px;height:14px;background:#f4f4f3;"></div>
<svg style="left:205px;top:29.7px" width="16" height="16" viewBox="0 0 16 16"><path d="M10.4 10.6 L14.6 14.2" stroke="#3a69aa" stroke-width="1.7" stroke-linecap="round"/><circle cx="6.6" cy="6.5" r="5.6" fill="#fff" stroke="#a9c5e6" stroke-width="1.3"/><rect x="3.1" y="5.7" width="7" height="1.7" fill="#0a0a7a"/><rect x="5.75" y="3" width="1.7" height="7" fill="#0a0a7a"/></svg>
<svg style="left:231px;top:29.7px" width="16" height="16" viewBox="0 0 16 16"><path d="M10.4 10.6 L14.6 14.2" stroke="#3a69aa" stroke-width="1.7" stroke-linecap="round"/><circle cx="6.6" cy="6.5" r="5.6" fill="#fff" stroke="#a9c5e6" stroke-width="1.3"/><rect x="3.1" y="5.7" width="7" height="1.7" fill="#0a0a7a"/></svg>
<svg style="left:256.9px;top:29.7px" width="16" height="16" viewBox="0 0 16 16"><path d="M10.4 10.6 L14.6 14.2" stroke="#3a69aa" stroke-width="1.7" stroke-linecap="round"/><circle cx="6.6" cy="6.5" r="5.6" fill="#fff" stroke="#a9c5e6" stroke-width="1.3"/><rect x="4.2" y="3.8" width="4.8" height="1.4" fill="#0a0a7a"/><rect x="5.9" y="2.1" width="1.4" height="4.8" fill="#0a0a7a"/><rect x="4.2" y="8.2" width="4.8" height="1.5" fill="#0a0a7a"/></svg>
<div style="left:281.8px;top:28.7px;width:1.1px;height:14px;background:#d9d9d8;"></div>
<div style="left:282.9px;top:28.7px;width:1px;height:14px;background:#f4f4f3;"></div>
<svg style="left:295px;top:31px" width="13" height="12.4" viewBox="0 0 13 12.4"><rect x="0.6" y="0.6" width="11.2" height="10.8" rx="1.4" fill="#eef7ff" stroke="#a5b3d3" stroke-width="1.1"/><rect x="2.9" y="5.2" width="6.8" height="1.7" rx="0.5" fill="#0a0a7a"/></svg>
<div style="left:318.4px;top:28.7px;width:1.1px;height:14px;background:#d9d9d8;"></div>
<div style="left:319.5px;top:28.7px;width:1px;height:14px;background:#f4f4f3;"></div>
<svg style="left:332.5px;top:31px" width="11" height="12.4" viewBox="0 0 11 12.4"><path d="M1.5 11.8 V1.6 H9.4 M1.5 5.9 H5.6" fill="none" stroke="#c6c6c5" stroke-width="1.8"/></svg>
<svg style="left:356.5px;top:30px" width="14" height="13.4" viewBox="0 0 14 13.4"><path d="M3.7 12.8 V2.7 H11.2 M3.7 6.9 H7.6" fill="none" stroke="#0b8a0b" stroke-width="1.7"/><path d="M1 0.9 L12.2 12.1" stroke="#ff1f1f" stroke-width="1.3"/></svg>
<div style="left:380.9px;top:28.7px;width:1.1px;height:14px;background:#d9d9d8;"></div>
<div style="left:382px;top:28.7px;width:1px;height:14px;background:#f4f4f3;"></div>
<div style="left:389.3px;top:25.3px;width:23.4px;height:23.3px;background:linear-gradient(#e2e0dd,#efeeec);border:1px solid #b4b1ab;border-radius:4px;"></div>
<svg style="left:394.2px;top:30.8px" width="15" height="14" viewBox="0 0 15 14"><rect x="3.2" y="0.5" width="8.6" height="8.3" fill="#fcfcff" stroke="#c9b78a" stroke-width="1"/><path d="M5.6 2.3 V7.2 M9.7 2.3 L6.2 4.8 L9.9 7.2" fill="none" stroke="#10107a" stroke-width="1.4"/><rect x="0.2" y="10.2" width="14.6" height="3.7" fill="#8392b4"/><rect x="1.20" y="10.8" width="1.85" height="2.3" fill="#ee1c1c"/><rect x="3.05" y="10.8" width="1.85" height="2.3" fill="#ff8a00"/><rect x="4.90" y="10.8" width="1.85" height="2.3" fill="#f6ee00"/><rect x="6.75" y="10.8" width="1.85" height="2.3" fill="#1fc81f"/><rect x="8.60" y="10.8" width="1.85" height="2.3" fill="#19b5d8"/><rect x="10.45" y="10.8" width="1.85" height="2.3" fill="#e0107a"/><rect x="12.30" y="10.8" width="1.85" height="2.3" fill="#8a4fc0"/></svg>
<svg style="left:419.2px;top:29.8px" width="15" height="14" viewBox="0 0 15 14"><rect x="3.2" y="0.5" width="8.6" height="8.3" fill="#fcfcff" stroke="#c9b78a" stroke-width="1"/><path d="M9.3 2.6 H6.6 Q5.6 2.6 5.6 3.6 Q5.6 4.6 7.5 4.6 Q9.4 4.7 9.4 5.9 Q9.4 7 8.2 7 H5.6" fill="none" stroke="#10107a" stroke-width="1.2"/><rect x="0.2" y="10.2" width="14.6" height="3.7" fill="#8392b4"/><rect x="1.20" y="10.8" width="1.85" height="2.3" fill="#ee1c1c"/><rect x="3.05" y="10.8" width="1.85" height="2.3" fill="#ff8a00"/><rect x="4.90" y="10.8" width="1.85" height="2.3" fill="#f6ee00"/><rect x="6.75" y="10.8" width="1.85" height="2.3" fill="#1fc81f"/><rect x="8.60" y="10.8" width="1.85" height="2.3" fill="#19b5d8"/><rect x="10.45" y="10.8" width="1.85" height="2.3" fill="#e0107a"/><rect x="12.30" y="10.8" width="1.85" height="2.3" fill="#8a4fc0"/></svg>
<svg style="left:445.2px;top:29.8px" width="15" height="14" viewBox="0 0 15 14"><rect x="3.2" y="0.5" width="8.6" height="8.3" fill="#fcfcff" stroke="#c9b78a" stroke-width="1"/><path d="M5.8 7.3 V2.3" fill="none" stroke="#10107a" stroke-width="1.5"/><rect x="8" y="2.2" width="2" height="2.2" fill="#10107a"/><rect x="0.2" y="10.2" width="14.6" height="3.7" fill="#8392b4"/><rect x="1.20" y="10.8" width="1.85" height="2.3" fill="#ee1c1c"/><rect x="3.05" y="10.8" width="1.85" height="2.3" fill="#ff8a00"/><rect x="4.90" y="10.8" width="1.85" height="2.3" fill="#f6ee00"/><rect x="6.75" y="10.8" width="1.85" height="2.3" fill="#1fc81f"/><rect x="8.60" y="10.8" width="1.85" height="2.3" fill="#19b5d8"/><rect x="10.45" y="10.8" width="1.85" height="2.3" fill="#e0107a"/><rect x="12.30" y="10.8" width="1.85" height="2.3" fill="#8a4fc0"/></svg>
<div style="left:469.9px;top:28.7px;width:1.1px;height:14px;background:#d9d9d8;"></div>
<div style="left:471px;top:28.7px;width:1px;height:14px;background:#f4f4f3;"></div>
<svg style="left:481px;top:29px" width="17" height="16" viewBox="0 0 17 16"><path d="M8.4 3.3 L3.2 13.1 M8.4 3.3 L13.5 13.1" stroke="#3f4b6c" stroke-width="1.1"/><circle cx="8.4" cy="3.3" r="2.7" fill="#3aa24a" stroke="#2a8a3a" stroke-width="0.6"/><circle cx="3.2" cy="13.1" r="2.4" fill="#3aa24a" stroke="#2a8a3a" stroke-width="0.6"/><circle cx="13.5" cy="13.1" r="2.4" fill="#3aa24a" stroke="#2a8a3a" stroke-width="0.6"/></svg>
<svg style="left:508px;top:35.1px" width="7" height="5" viewBox="0 0 7 5"><path d="M0.2 0.3 H6.6 L3.4 4.5Z" fill="#8c8c8c"/></svg>
<svg style="left:8.5px;top:61.8px" width="13" height="15" viewBox="0 0 13 15"><path d="M0.2 1.3 L5.6 0.2 Q7 7 12.6 10.4 L7.6 14.5 L1.2 9.4Z" fill="url(#gnvf)"/></svg>
<svg style="left:133.5px;top:61.8px" width="13" height="15" viewBox="0 0 13 15"><path d="M0.2 1.3 L5.6 0.2 Q7 7 12.6 10.4 L7.6 14.5 L1.2 9.4Z" fill="url(#gnvf)"/></svg>
<svg style="left:258.8px;top:61.8px" width="13" height="15" viewBox="0 0 13 15"><path d="M0.2 1.3 L5.6 0.2 Q7 7 12.6 10.4 L7.6 14.5 L1.2 9.4Z" fill="url(#gnv)"/></svg>
<svg style="left:361.8px;top:64.6px" width="10" height="10" viewBox="0 0 10 10"><path d="M1 1 L2.6 0.6 L4.8 3 L7 0.6 L8.6 1 L9 2.6 L6.6 4.8 L9 7 L8.6 8.6 L7 9 L4.8 6.6 L2.6 9 L1 8.6 L0.6 7 L3 4.8 L0.6 2.6Z" fill="#fff" stroke="#1a1a1a" stroke-width="1" stroke-linejoin="round"/></svg>
<svg style="left:1546px;top:64.3px" width="10.5" height="5" viewBox="0 0 10.5 5"><rect x="0.6" y="0.6" width="8.8" height="2.8" rx="0.5" fill="#fff" stroke="#3c3c3c" stroke-width="1"/></svg>
<svg style="left:1571.8px;top:64.3px" width="10.5" height="10.5" viewBox="0 0 10.5 10.5"><rect x="0.6" y="0.6" width="8.8" height="8.4" fill="#fff" stroke="#333" stroke-width="1"/><rect x="0.6" y="0.6" width="8.8" height="1.3" fill="#444"/></svg>
<svg style="left:1144.8px;top:604px" width="10.5" height="5" viewBox="0 0 10.5 5"><rect x="0.6" y="0.6" width="8.8" height="2.8" rx="0.5" fill="#fff" stroke="#3c3c3c" stroke-width="1"/></svg>
<svg style="left:1170.8px;top:604px" width="10.5" height="10.5" viewBox="0 0 10.5 10.5"><rect x="0.6" y="0.6" width="8.8" height="8.4" fill="#fff" stroke="#333" stroke-width="1"/><rect x="0.6" y="0.6" width="8.8" height="1.3" fill="#444"/></svg>
<svg style="left:1546px;top:604px" width="10.5" height="5" viewBox="0 0 10.5 5"><rect x="0.6" y="0.6" width="8.8" height="2.8" rx="0.5" fill="#fff" stroke="#3c3c3c" stroke-width="1"/></svg>
<svg style="left:1572px;top:604px" width="10.5" height="10.5" viewBox="0 0 10.5 10.5"><rect x="0.6" y="0.6" width="8.8" height="8.4" fill="#fff" stroke="#333" stroke-width="1"/><rect x="0.6" y="0.6" width="8.8" height="1.3" fill="#444"/></svg>
<svg style="left:8.2px;top:603.2px" width="15" height="12" viewBox="0 0 15 12"><rect x="0.5" y="0.5" width="13.6" height="10.2" fill="url(#gwin)" stroke="#cdbc98" stroke-width="0.9"/><rect x="0.6" y="0.4" width="13.4" height="1.6" fill="#3f7fcf"/><rect x="7.2" y="5.4" width="7" height="5.8" fill="#f4f4f4" stroke="#8a8a8a" stroke-width="0.8"/><path d="M8.6 9.8 L10.4 7.6 L11.4 8.8 L12.8 7.2" fill="none" stroke="#5a9a5a" stroke-width="0.7"/></svg>
<svg style="left:84px;top:604px" width="10" height="10" viewBox="0 0 10 10"><path d="M1 1 L2.6 0.6 L4.8 3 L7 0.6 L8.6 1 L9 2.6 L6.6 4.8 L9 7 L8.6 8.6 L7 9 L4.8 6.6 L2.6 9 L1 8.6 L0.6 7 L3 4.8 L0.6 2.6Z" fill="#fff" stroke="#1a1a1a" stroke-width="1" stroke-linejoin="round"/></svg>
<svg style="left:104.5px;top:603.4px" width="15" height="11" viewBox="0 0 15 11"><rect x="0" y="0" width="14.5" height="10.6" fill="#7ee05a"/><rect x="0" y="0" width="14.5" height="2.2" fill="#a9c1e2"/><path d="M0 4.3 H14.5 M0 6.4 H14.5 M0 8.5 H14.5 M2.4 2.2 V10.6 M4.8 2.2 V10.6 M7.2 2.2 V10.6 M9.7 2.2 V10.6 M12.1 2.2 V10.6" stroke="#b9f0a4" stroke-width="0.6"/></svg>
<svg style="left:274px;top:603.4px" width="15" height="11" viewBox="0 0 15 11"><rect x="0" y="0" width="14.5" height="10.2" fill="#a9daf2"/><rect x="0" y="0" width="14.5" height="2.2" fill="#9fb9dc"/><path d="M0 4.9 H14.5 M0 7.6 H14.5 M4.8 2.2 V10.2 M9.7 2.2 V10.2" stroke="#e4f4fc" stroke-width="0.8"/></svg>
<svg style="left:373.2px;top:603.2px" width="15.5" height="12" viewBox="0 0 15.5 12"><rect x="0.5" y="0.5" width="12" height="9.4" fill="#f8f8f8" stroke="#c9c4ba" stroke-width="0.9"/><rect x="0.6" y="0.5" width="11.8" height="1.4" fill="#c9d6ea"/><rect x="4.6" y="3.4" width="9.8" height="8" fill="#fbfbfb" stroke="#b8b3a8" stroke-width="0.9"/><path d="M8 9.8 L9 5 M10.3 9.8 L11.3 5 M7.2 6.6 H12.4 M6.8 8.4 H12" stroke="#9a968c" stroke-width="0.6" fill="none"/></svg>
<svg style="left:505.4px;top:603.2px" width="15.5" height="12" viewBox="0 0 15.5 12"><rect x="0.5" y="0.5" width="12" height="9.4" fill="#f8f8f8" stroke="#c9c4ba" stroke-width="0.9"/><rect x="0.6" y="0.5" width="11.8" height="1.4" fill="#c9d6ea"/><rect x="4.6" y="3.4" width="9.8" height="8" fill="#fbfbfb" stroke="#b8b3a8" stroke-width="0.9"/><path d="M8 9.8 L9 5 M10.3 9.8 L11.3 5 M7.2 6.6 H12.4 M6.8 8.4 H12" stroke="#9a968c" stroke-width="0.6" fill="none"/></svg>
<svg style="left:633.4px;top:602.6px" width="12.5" height="12.5" viewBox="0 0 12.5 12.5"><rect x="0.6" y="0.6" width="10.8" height="8.2" rx="1" fill="#eaf0fb" stroke="#6a84c0" stroke-width="1.2"/><path d="M2.8 3.4 H9 M2.8 5.6 H7" stroke="#4a64a8" stroke-width="0.9"/><rect x="3" y="9.6" width="6" height="1.6" fill="#7f95c6"/></svg>
<svg style="left:708.4px;top:603.2px" width="15" height="12" viewBox="0 0 15 12"><rect x="0.5" y="0.5" width="13.2" height="9.8" fill="url(#gwin)" stroke="#c9c4ba" stroke-width="0.9"/><rect x="0.6" y="0.4" width="13" height="1.5" fill="#9fbde6"/><rect x="8" y="5" width="6.2" height="6.2" fill="#fafafa" stroke="#9a9a9a" stroke-width="0.8"/><path d="M10.2 6.6 V9.8 M12 6.6 V9.8" stroke="#6aa06a" stroke-width="0.8"/></svg>
<svg style="left:14.9px;top:634px" width="13.5" height="13.5" viewBox="0 0 13.5 13.5"><rect x="0.5" y="0.5" width="12.2" height="12" fill="#fcfcfc" stroke="#d2c3a0" stroke-width="0.9"/><path d="M2.4 3 H3.4" stroke="#5a8a5a" stroke-width="1.1"/><path d="M4.8 3 H10.4" stroke="#b4bcb4" stroke-width="1.1"/><path d="M2.2 6.3 H3.5 M2.2 9.6 H3.5" stroke="#0a5f0a" stroke-width="1.4"/><path d="M4.8 6.3 H10.6 M4.8 9.6 H10.6" stroke="#1d701d" stroke-width="0.95"/></svg>
<svg style="left:40px;top:632.8px" width="13.5" height="13.5" viewBox="0 0 13.5 13.5"><rect x="0.5" y="0.5" width="12.2" height="12" fill="#fcfcfc" stroke="#d2c3a0" stroke-width="0.9"/><path d="M2.4 3 H3.4" stroke="#5a8a5a" stroke-width="1.1"/><path d="M4.8 3 H10.4" stroke="#b4bcb4" stroke-width="1.1"/><path d="M2.2 6.3 H3.5 M2.2 9.6 H3.5" stroke="#0a5f0a" stroke-width="1.4"/><path d="M4.8 6.3 H10.6 M4.8 9.6 H10.6" stroke="#1d701d" stroke-width="0.95"/></svg>
<svg style="left:66.5px;top:632.5px" width="12" height="13.5" viewBox="0 0 12 13.5"><path d="M5.8 0.7 L11.2 6.2 H8.2 V12.4 H3.4 V6.2 H0.4Z" fill="url(#garrow)" stroke="#d39a2c" stroke-width="0.9" stroke-linejoin="round"/></svg>
<svg style="left:132px;top:632px" width="15" height="14.5" viewBox="0 0 15 14.5"><rect x="0.5" y="0.5" width="12" height="11.8" fill="#fbfbfb" stroke="#dcdcdc" stroke-width="0.9"/><path d="M3.4 9.6 V6.6 M5.8 9.6 V3.6 M8.2 9.6 V5.6" stroke="#d0d0d0" stroke-width="1.2"/><path d="M9.6 8.6 L14.2 11.2 L9.6 13.8Z" fill="#dedede"/></svg>
<svg style="left:1114.8px;top:605px" width="14" height="9" viewBox="0 0 14 9"><path d="M0.6 0.6 L2 0.4 L7 5.4 L5.6 6.8 L0.6 1.8Z" fill="#e6c77a" stroke="#a98a3c" stroke-width="0.5"/><rect x="8.6" y="6.4" width="1.4" height="1.5" fill="#222"/><rect x="11.6" y="6.4" width="1.4" height="1.5" fill="#222"/></svg>
<svg style="left:1207px;top:603px" width="12" height="11" viewBox="0 0 12 11"><rect x="0.5" y="0.5" width="10.8" height="9.8" fill="#f6f8fc" stroke="#9aa6bf" stroke-width="0.9"/><rect x="0.5" y="0.5" width="10.8" height="2.2" fill="#8f9fc0"/><path d="M0.5 5 H11.3 M0.5 7.4 H11.3 M3.6 2.7 V10.3" stroke="#b9c3d6" stroke-width="0.7"/></svg>
<svg style="left:1296px;top:604px" width="10" height="10" viewBox="0 0 10 10"><path d="M1 1 L2.6 0.6 L4.8 3 L7 0.6 L8.6 1 L9 2.6 L6.6 4.8 L9 7 L8.6 8.6 L7 9 L4.8 6.6 L2.6 9 L1 8.6 L0.6 7 L3 4.8 L0.6 2.6Z" fill="#fff" stroke="#1a1a1a" stroke-width="1" stroke-linejoin="round"/></svg>
</div></body></html>
